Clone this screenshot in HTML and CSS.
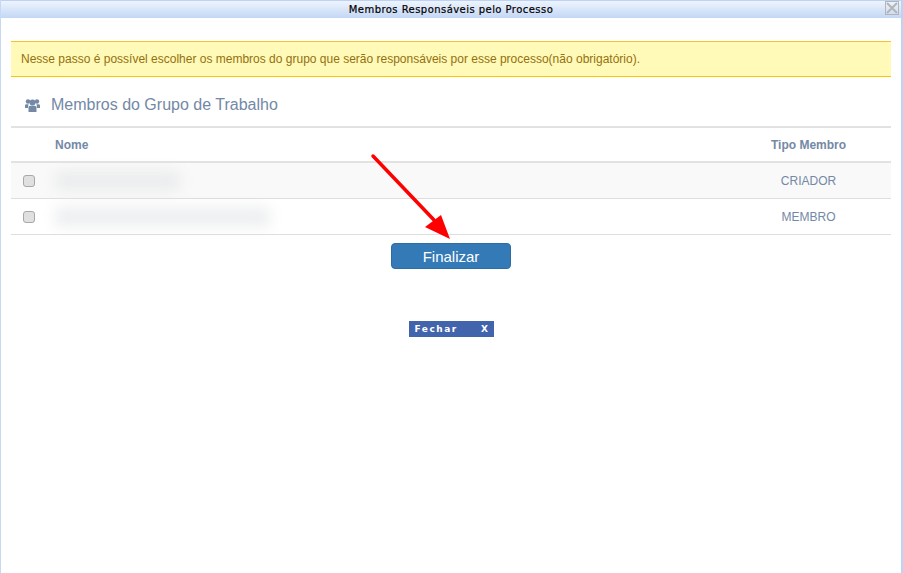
FILE: index.html
```html
<!DOCTYPE html>
<html lang="pt-BR">
<head>
  <meta charset="utf-8" />
  <title>Membros Responsáveis pelo Processo</title>
  <link rel="stylesheet" href="styles.css">
</head>
<body>
  <div class="window">
    <div class="title-bar">
      <span class="title-text">Membros Responsáveis pelo Processo</span>
      <span class="title-close">
        <svg width="12" height="12" viewBox="0 0 12 12"><path d="M1 1l10 10M11 1L1 11" stroke="#b4b4b4" stroke-width="2" fill="none"/></svg>
      </span>
    </div>

    <div class="content">
      <div class="alert">Nesse passo é possível escolher os membros do grupo que serão responsáveis por esse processo(não obrigatório).</div>

      <div class="panel-title">
        <svg class="users-icon" width="15" height="13" viewBox="0 0 15 13">
          <circle cx="3" cy="2.500" r="2.200" fill="#7389a6"/>
          <circle cx="12" cy="2.500" r="2.200" fill="#7389a6"/>
          <circle cx="7.500" cy="3.500" r="3" fill="#7389a6"/>
          <path d="M0 9V6.500Q0 5.300 1.500 5.300H3.500L3 9zM15 9V6.500Q15 5.300 13.500 5.300H11.500L12 9z" fill="#7389a6"/>
          <path d="M3.500 13V8.500Q3.500 6.800 5.500 6.800H9.500Q11.500 6.800 11.500 8.500V13z" fill="#7389a6"/>
        </svg>
        <span>Membros do Grupo de Trabalho</span>
      </div>

      <div class="table">
        <div class="row head">
          <div class="cell-check"></div>
          <div class="cell-name">Nome</div>
          <div class="cell-type">Tipo Membro</div>
        </div>
        <div class="row odd">
          <div class="cell-check"><input type="checkbox"></div>
          <div class="cell-name"><div class="blurred short"></div></div>
          <div class="cell-type">CRIADOR</div>
        </div>
        <div class="row">
          <div class="cell-check"><input type="checkbox"></div>
          <div class="cell-name"><div class="blurred long"></div></div>
          <div class="cell-type">MEMBRO</div>
        </div>
      </div>

      <div class="actions">
        <button class="finish">Finalizar</button>
      </div>

      <div class="close-wrap">
        <button class="close-bar"><span>Fechar</span><span>X</span></button>
      </div>
    </div>

    <svg class="arrow" width="100" height="100" viewBox="0 0 100 100">
      <path d="M3 3L64 67" stroke="#f00" stroke-width="3.500" stroke-linecap="round" fill="none"/>
      <path d="M80 86L71 62L55 74z" fill="#f00"/>
    </svg>
  </div>
</body>
</html>
```

FILE: styles.css
```css
html, body {
  margin: 0;
  height: 100%;
  background: #fff;
}

body {
  font-family: "Liberation Sans", Arial, sans-serif;
  overflow: hidden;
}

.window {
  position: relative;
  height: 573px;
  box-sizing: border-box;
  border-left: 1px solid #c5d9f5;
  border-right: 2px solid #bcd4f4;
}

.title-bar {
  height: 18px;
  box-sizing: border-box;
  border-top: 1px solid #b9d2f5;
  background: linear-gradient(to bottom, #eef4fd, #c3d7f5);
  display: flex;
  justify-content: center;
  align-items: center;
  position: relative;
}

.title-text {
  font-family: "DejaVu Sans", Verdana, sans-serif;
  font-size: 10px;
  letter-spacing: 0.45px;
  color: #000;
  -webkit-text-stroke: 0.2px #000;
}

.title-close {
  position: absolute;
  top: 0;
  right: 2px;
  width: 12px;
  height: 12px;
  border: 1px solid #b4b4b4;
  display: block;
}

.title-close svg {
  display: block;
}

.content {
  padding: 23px 10px 0;
}

.alert {
  height: 36px;
  box-sizing: border-box;
  background: #fffab8;
  border-top: 1px solid #fbc02d;
  border-bottom: 1px solid #fdc500;
  color: #94700f;
  font-size: 12px;
  line-height: 34px;
  padding-left: 10px;
}

.panel-title {
  height: 51px;
  box-sizing: border-box;
  display: flex;
  align-items: center;
  color: #7389a6;
  font-size: 16px;
  padding: 7px 0 0 14px;
  gap: 11px;
  border-bottom: 2px solid #e2e2e2;
}

.table {
  font-size: 12px;
  color: #7389a6;
}

.row {
  display: flex;
  align-items: center;
  height: 36px;
  box-sizing: border-box;
  border-bottom: 1px solid #dedede;
}

.row.head {
  height: 35px;
  font-weight: bold;
  border-bottom: 2px solid #e2e2e2;
}

.row.odd {
  background: #f9f9f9;
}

.cell-check {
  width: 44px;
  box-sizing: border-box;
  padding-left: 12px;
  display: flex;
}

.cell-check input {
  appearance: none;
  width: 12px;
  height: 12px;
  margin: 0;
  background: #e0e0e0;
  border: 1px solid #a8a8a8;
  border-radius: 3px;
}

.cell-name {
  flex: 1;
}

.cell-type {
  width: 165px;
  text-align: center;
}

.blurred {
  height: 20px;
  background: #dfe2e4;
  filter: blur(7px);
  opacity: 0.55;
}

.blurred.short {
  width: 125px;
}

.blurred.long {
  width: 215px;
}

.actions {
  display: flex;
  justify-content: center;
  padding-top: 8px;
}

.finish {
  width: 120px;
  height: 26px;
  background: #337ab7;
  border: 1px solid #2e6da4;
  border-radius: 4px;
  color: #fff;
  font-family: "Liberation Sans", Arial, sans-serif;
  font-size: 15px;
  padding: 0;
}

.close-wrap {
  display: flex;
  justify-content: center;
  padding-top: 52px;
}

.close-bar {
  width: 85px;
  height: 16px;
  background: #4264ac;
  border: 0;
  color: #fff;
  font-family: "DejaVu Sans", Verdana, sans-serif;
  font-size: 9px;
  font-weight: bold;
  letter-spacing: 1.500px;
  display: flex;
  justify-content: space-between;
  align-items: center;
  padding: 0 4px 0 6px;
}

.arrow {
  position: absolute;
  left: 369px;
  top: 153px;
}
```
